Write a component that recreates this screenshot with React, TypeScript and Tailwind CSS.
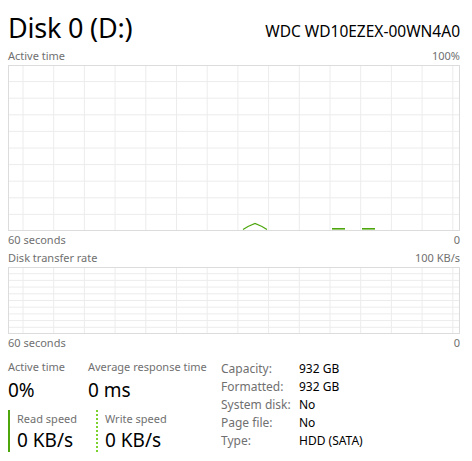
import React from "react";

const GREEN = "#4da60c";

const vLines = Array.from({ length: 15 }, (_, i) => 15 + i * 30.7);

function Chart({ height, rows, children }: { height: number; rows: number; children?: React.ReactNode }) {
  const hLines = Array.from({ length: rows - 1 }, (_, i) => ((i + 1) * height) / rows);
  return (
    <div className="w-full border border-[#dcdcdc] bg-white" style={{ height }}>
      <svg width="100%" height="100%" viewBox={`0 0 450 ${height - 2}`} preserveAspectRatio="none">
        {vLines.map((x) => (
          <line key={"v" + x} x1={x - 1} x2={x - 1} y1={0} y2={height} stroke="#ececec" strokeWidth={1} />
        ))}
        {hLines.map((y) => (
          <line key={"h" + y} x1={0} x2={450} y1={y - 1} y2={y - 1} stroke="#ececec" strokeWidth={1} />
        ))}
        {children}
      </svg>
    </div>
  );
}

function AxisRow({ left, right }: { left: string; right: string }) {
  return (
    <div className="flex justify-between text-[11px] leading-[18px] text-[#707070]">
      <span>{left}</span>
      <span>{right}</span>
    </div>
  );
}

const details = [
  ["Capacity:", "932 GB"],
  ["Formatted:", "932 GB"],
  ["System disk:", "No"],
  ["Page file:", "No"],
  ["Type:", "HDD (SATA)"],
];

export default function App() {
  return (
    <div
      className="w-[472px] h-[461px] bg-white pl-2 pr-3 overflow-hidden"
      style={{ fontFamily: '"Noto Sans", "Open Sans", sans-serif' }}
    >
      {/* Header */}
      <div className="flex items-end justify-between h-[47px] pb-[6px]">
        <h1 className="text-[27px] font-normal leading-none text-black tracking-[-0.2px]">Disk 0 (D:)</h1>
        <span className="text-[15.5px] leading-none text-black pb-[2px]">WDC WD10EZEX-00WN4A0</span>
      </div>

      <AxisRow left="Active time" right="100%" />
      <Chart height={166} rows={10}>
        <polyline
          points="234,163.5 239,160.5 246,157.5 253,160.5 258,163.5"
          fill="none"
          stroke={GREEN}
          strokeWidth={1.2}
        />
        <polyline points="323,162.8 336,162.8" fill="none" stroke={GREEN} strokeWidth={1.6} />
        <polyline points="353,162.8 366,162.8" fill="none" stroke={GREEN} strokeWidth={1.6} />
      </Chart>
      <AxisRow left="60 seconds" right="0" />

      <AxisRow left="Disk transfer rate" right="100 KB/s" />
      <Chart height={67} rows={10} />
      <AxisRow left="60 seconds" right="0" />

      {/* Stats */}
      <div className="flex mt-[6px]">
        <div className="w-[213px] flex flex-col">
          <div className="flex">
            <div className="w-[80px]">
              <div className="text-[11px] leading-[18px] text-[#707070]">Active time</div>
              <div className="text-[19px] leading-[28px] text-black">0%</div>
            </div>
            <div>
              <div className="text-[11px] leading-[18px] text-[#707070]">Average response time</div>
              <div className="text-[19px] leading-[28px] text-black">0 ms</div>
            </div>
          </div>
          <div className="flex mt-[6px]">
            <div className="w-[88px] border-l-2 border-[#4da60c] pl-[7px]">
              <div className="text-[11px] leading-[18px] text-[#707070]">Read speed</div>
              <div className="text-[19px] leading-[24px] text-black">0 KB/s</div>
            </div>
            <div className="border-l-2 border-dotted border-[#7bd12e] pl-[7px]">
              <div className="text-[11px] leading-[18px] text-[#707070]">Write speed</div>
              <div className="text-[19px] leading-[24px] text-black">0 KB/s</div>
            </div>
          </div>
        </div>
        <div className="flex flex-col mt-[2px]">
          {details.map(([k, v]) => (
            <div key={k} className="flex text-[12px] leading-[18px]">
              <span className="w-[78px] text-[#707070]">{k}</span>
              <span className="text-black">{v}</span>
            </div>
          ))}
        </div>
      </div>
    </div>
  );
}
